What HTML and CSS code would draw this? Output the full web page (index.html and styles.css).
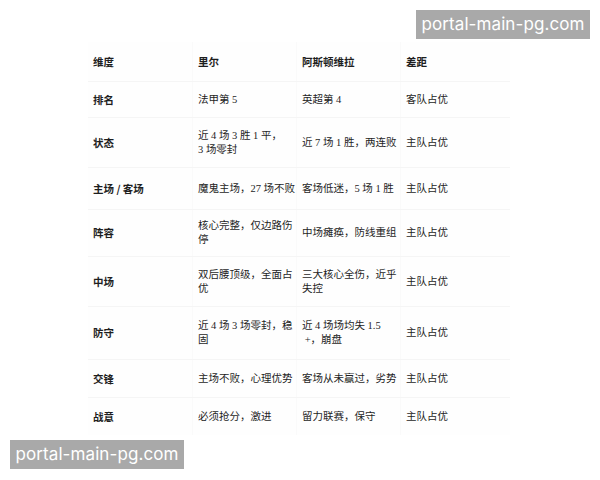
FILE: index.html
```html
<!DOCTYPE html>
<html lang="zh">
<head>
<meta charset="utf-8">
<link rel="stylesheet" href="styles.css">
</head>
<body>
<div class="page">
  <div class="table">
    <div class="row head"><div class="c k">维度</div><div class="c k">里尔</div><div class="c k">阿斯顿维拉</div><div class="c k">差距</div></div>
    <div class="row r1"><div class="c k">排名</div><div class="c">法甲第 5</div><div class="c">英超第 4</div><div class="c">客队占优</div></div>
    <div class="row r2"><div class="c k">状态</div><div class="c"><span>近 4 场 3 胜 1 平，<br>3 场零封</span></div><div class="c">近 7 场 1 胜，两连败</div><div class="c">主队占优</div></div>
    <div class="row r3"><div class="c k">主场 / 客场</div><div class="c">魔鬼主场，27 场不败</div><div class="c">客场低迷，5 场 1 胜</div><div class="c">主队占优</div></div>
    <div class="row r4"><div class="c k">阵容</div><div class="c">核心完整，仅边路伤停</div><div class="c">中场瘫痪，防线重组</div><div class="c">主队占优</div></div>
    <div class="row r5"><div class="c k">中场</div><div class="c">双后腰顶级，全面占优</div><div class="c">三大核心全伤，近乎失控</div><div class="c">主队占优</div></div>
    <div class="row r6"><div class="c k">防守</div><div class="c">近 4 场 3 场零封，稳固</div><div class="c"><span>近 4 场场均失 1.5<br>&nbsp;+，崩盘</span></div><div class="c">主队占优</div></div>
    <div class="row r7"><div class="c k">交锋</div><div class="c">主场不败，心理优势</div><div class="c">客场从未赢过，劣势</div><div class="c">主队占优</div></div>
    <div class="row r8 last"><div class="c k">战意</div><div class="c">必须抢分，激进</div><div class="c">留力联赛，保守</div><div class="c">主队占优</div></div>
  </div>
  <div class="mark mark-top">portal-main-pg.com</div>
  <div class="mark mark-bottom">portal-main-pg.com</div>
</div>
</body>
</html>
```
FILE: styles.css
```css
html, body {
  margin: 0;
  padding: 0;
  background: #ffffff;
}
.page {
  position: relative;
  width: 600px;
  height: 480px;
  overflow: hidden;
  padding: 42px 0 0 88px;
  box-sizing: border-box;
}
.table {
  width: 422px;
  font-family: "Liberation Serif", "Noto Sans CJK SC", serif;
  font-size: 10.5px;
  line-height: 14px;
  color: #1e1e1e;
  background: #fefefe;
}
.row {
  display: grid;
  grid-template-columns: 104px 104px 104px 110px;
  align-items: center;
  border-bottom: 1px solid #f5f5f5;
  box-sizing: border-box;
}
.row.last { border-bottom: none; }
.head { height: 40px; }
.r1 { height: 36px; }
.r2 { height: 50px; }
.r3 { height: 42px; }
.r4 { height: 47px; }
.r5 { height: 50px; }
.r6 { height: 53px; }
.r7 { height: 38px; }
.r8 { height: 37px; }
.c {
  padding: 0 0 0 5px;
  border-left: 1px solid #fafafa;
  height: 100%;
  display: flex;
  align-items: center;
  box-sizing: border-box;
}
.c:first-child { border-left: none; }
.k {
  font-family: "Noto Sans CJK SC", sans-serif;
  font-weight: 700;
}
.mark {
  position: absolute;
  background: #a9a9a9;
  color: #ffffff;
  font-family: Inter, "Noto Sans", sans-serif;
  font-size: 17px;
  line-height: 29px;
  height: 29px;
  width: 174px;
  text-align: center;
  letter-spacing: 0.1px;
}
.mark-top { left: 416px; top: 10px; }
.mark-bottom { left: 10px; top: 440px; }
```
